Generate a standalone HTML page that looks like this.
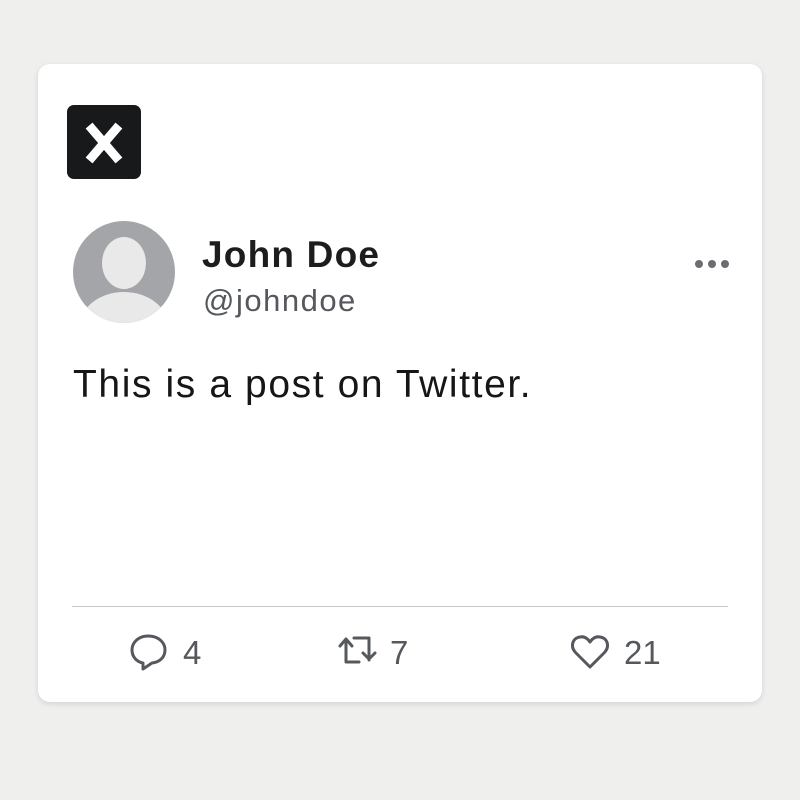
<!DOCTYPE html>
<html><head><style>
body{margin:0;width:800px;height:800px;background:#efefee;font-family:"Liberation Sans",sans-serif;position:relative;overflow:hidden}
.card{position:absolute;left:38px;top:64px;width:724px;height:638px;background:#fff;border-radius:12px;box-shadow:0 2px 6px rgba(0,0,0,0.12)}
.x{position:absolute;left:67px;top:105px;width:74px;height:74px;background:#17191b;border-radius:7px}
.t{position:absolute;white-space:nowrap}
</style></head><body>
<div class="card"></div>
<div class="x"><svg width="74" height="74"><path d="M25 24 L49 52 M49 24 L25 52" stroke="#fff" stroke-width="9" stroke-linecap="square"/></svg></div>
<svg style="position:absolute;left:73px;top:221px" width="102" height="102">
<defs><clipPath id="c"><circle cx="51" cy="51" r="51"/></clipPath></defs>
<circle cx="51" cy="51" r="51" fill="#a3a5a8"/>
<g clip-path="url(#c)" fill="#e9e9ea">
<ellipse cx="51" cy="42" rx="22" ry="26"/>
<ellipse cx="51" cy="105" rx="44" ry="34"/>
</g></svg>
<div class="t" style="left:202px;top:234px;font-size:37px;font-weight:bold;color:#1c1d1f;letter-spacing:1.2px">John Doe</div>
<div class="t" style="left:203px;top:283px;font-size:31px;color:#55585c;letter-spacing:1.5px">@johndoe</div>
<svg style="position:absolute;left:694px;top:258px" width="40" height="12" fill="#6a6d71"><circle cx="5" cy="6" r="4"/><circle cx="18" cy="6" r="4"/><circle cx="31" cy="6" r="4"/></svg>
<div class="t" style="left:73px;top:363px;font-size:39px;color:#151617;letter-spacing:1.6px">This is a post on Twitter.</div>
<div style="position:absolute;left:72px;top:606px;width:656px;height:1px;background:#c9c9c9"></div>
<svg style="position:absolute;left:0;top:0" width="800" height="800" fill="none" stroke="#55585c" stroke-width="3" stroke-linecap="round" stroke-linejoin="round">
<path d="M148 636 C139 636 132 642 132 650 C132 657 137 662 143 663 L143 669 L152 663 C161 662 165 656 165 650 C165 642 158 636 148 636 Z"/>
<path d="M346 640 L346 662 L359 662 M340 646 L346 639 L352 646"/>
<path d="M354 638 L369 638 L369 660 M363 653 L369 659 L375 653"/>
<path d="M590 667 L576 653 C570 647 572 638 580 637 C585 636 588 639 590 642 C592 639 595 636 600 637 C608 638 610 647 604 653 Z"/>
</svg>
<div class="t" style="left:183px;top:634px;font-size:33px;color:#55585c">4</div>
<div class="t" style="left:390px;top:634px;font-size:33px;color:#55585c">7</div>
<div class="t" style="left:624px;top:634px;font-size:33px;color:#55585c">21</div>
</body></html>
